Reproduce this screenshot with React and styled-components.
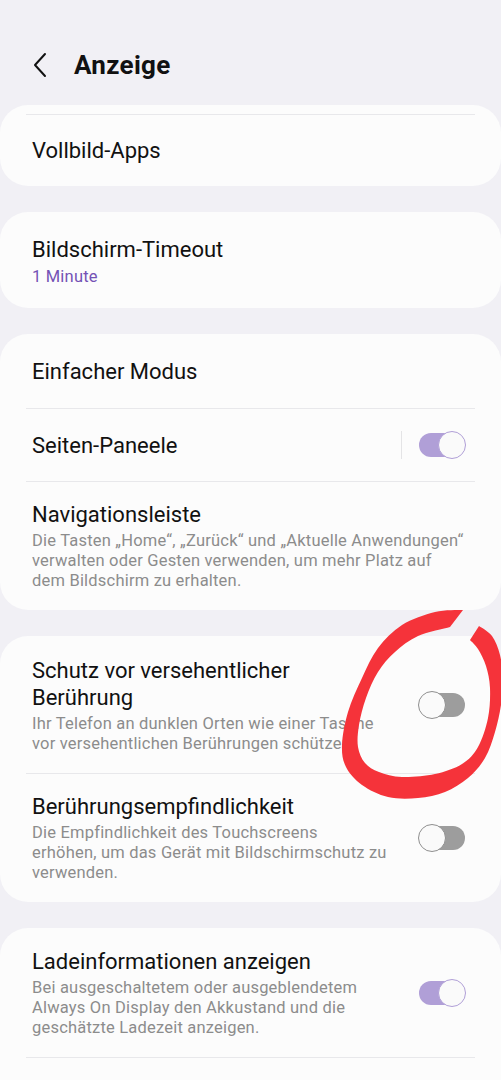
import React from "react";
import styled, { createGlobalStyle } from "styled-components";

const Global = createGlobalStyle`
  html, body {
    margin: 0;
    padding: 0;
    background: #f1f0f5;
  }
  body {
    font-family: Roboto, "Noto Sans", "Liberation Sans", sans-serif;
    -webkit-font-smoothing: antialiased;
  }
`;

const Page = styled.div`
  position: relative;
  width: 501px;
  height: 1080px;
  overflow: hidden;
  background: #f1f0f5;
`;

const Header = styled.header`
  height: 105px;
  padding-top: 25px;
  box-sizing: border-box;
  display: flex;
  align-items: center;
  padding-left: 32px;
  gap: 26px;
`;

const Title = styled.h1`
  margin: 0;
  font-size: 26px;
  font-weight: 700;
  color: #111;
  letter-spacing: 0.3px;
`;

const List = styled.div`
  display: flex;
  flex-direction: column;
  gap: 26px;
`;

const Card = styled.section`
  background: #fcfcfc;
  border-radius: 28px;
  padding-top: ${(p) => (p.$scrolled ? "9px" : "0")};
`;

const Divider = styled.div`
  height: 1px;
  margin: 0 26px;
  background: #e8e8eb;
`;

const Row = styled.div`
  display: flex;
  align-items: center;
  padding: ${(p) => p.$pt}px 32px ${(p) => p.$pb}px 32px;
  box-sizing: border-box;
`;

const Text = styled.div`
  flex: 1;
  padding-right: ${(p) => (p.$withControl ? "29px" : "0")};
`;

const Label = styled.div`
  font-size: 22px;
  line-height: 27px;
  color: #111;
`;

const Sub = styled.div`
  margin-top: 4px;
  font-size: 16.5px;
  line-height: 20px;
  letter-spacing: 0.2px;
  color: #7452b5;
`;

const Desc = styled.div`
  margin-top: 3px;
  font-size: 16.5px;
  line-height: 20px;
  letter-spacing: 0.2px;
  color: #8c8c8c;
`;

const VLine = styled.div`
  width: 1px;
  height: 28px;
  background: #e4e4e6;
  margin-right: 16px;
`;

const Track = styled.div`
  position: relative;
  width: 48px;
  height: 28px;
  flex: none;
  margin-right: 3px;
  &::before {
    content: "";
    position: absolute;
    left: 1px;
    right: 1px;
    top: 2px;
    bottom: 2px;
    border-radius: 12px;
    background: ${(p) => (p.$on ? "#b09fd7" : "#9d9d9d")};
  }
  &::after {
    content: "";
    position: absolute;
    top: 0;
    left: ${(p) => (p.$on ? "20px" : "0")};
    width: 28px;
    height: 28px;
    box-sizing: border-box;
    border-radius: 50%;
    background: #fafafa;
    border: 1.5px solid ${(p) => (p.$on ? "#b09fd7" : "#8f8f8f")};
  }
`;

const Annotation = styled.svg`
  position: absolute;
  left: 0;
  top: 0;
  pointer-events: none;
`;

const Back = () => (
  <svg width="16" height="26" viewBox="0 0 16 26">
    <path d="M13 2 L3 13 L13 24" fill="none" stroke="#111" strokeWidth="2" strokeLinecap="round" strokeLinejoin="round" />
  </svg>
);

// hand drawn marker stroke: outer edge then inner edge, smoothed
const outer = [
  [463, 610], [435, 612], [402, 625], [378, 648], [362, 678], [348, 712],
  [342, 745], [346, 767], [362, 785], [388, 797], [418, 798], [445, 792],
  [468, 778], [485, 758], [495, 732], [501, 705], [503, 680], [500, 655],
  [492, 636], [479, 626],
];
const inner = [
  [470, 640], [478, 649], [486, 666], [490, 688], [488, 718], [478, 747],
  [462, 764], [435, 774], [402, 777], [379, 772], [365, 763], [358, 747],
  [359, 725], [366, 698], [378, 672], [395, 652], [418, 636], [450, 627],
];

const smooth = (pts) => {
  let d = "";
  for (let i = 0; i < pts.length - 1; i++) {
    const p0 = pts[i - 1] || pts[i];
    const p1 = pts[i];
    const p2 = pts[i + 1];
    const p3 = pts[i + 2] || p2;
    const c1 = [p1[0] + (p2[0] - p0[0]) / 6, p1[1] + (p2[1] - p0[1]) / 6];
    const c2 = [p2[0] - (p3[0] - p1[0]) / 6, p2[1] - (p3[1] - p1[1]) / 6];
    d += ` C${c1[0]},${c1[1]} ${c2[0]},${c2[1]} ${p2[0]},${p2[1]}`;
  }
  return d;
};

const markPath =
  `M${outer[0][0]},${outer[0][1]}` +
  smooth(outer) +
  ` L${inner[0][0]},${inner[0][1]}` +
  smooth(inner) +
  " Z";

export default function App() {
  return (
    <Page>
      <Global />
      <Header>
        <Back />
        <Title>Anzeige</Title>
      </Header>
      <List>
        <Card $scrolled>
          <Divider />
          <Row $pt={22} $pb={22}>
            <Text>
              <Label>Vollbild-Apps</Label>
            </Text>
          </Row>
        </Card>

        <Card>
          <Row $pt={23.5} $pb={21.5}>
            <Text>
              <Label>Bildschirm-Timeout</Label>
              <Sub>1 Minute</Sub>
            </Text>
          </Row>
        </Card>

        <Card>
          <Row $pt={23.5} $pb={23.5}>
            <Text>
              <Label>Einfacher Modus</Label>
            </Text>
          </Row>
          <Divider />
          <Row $pt={22} $pb={22}>
            <Text $withControl>
              <Label>Seiten-Paneele</Label>
            </Text>
            <VLine />
            <Track $on />
          </Row>
          <Divider />
          <Row $pt={18.5} $pb={19.5}>
            <Text>
              <Label>Navigationsleiste</Label>
              <Desc>
                Die Tasten „Home“, „Zurück“ und „Aktuelle Anwendungen“
                verwalten oder Gesten verwenden, um mehr Platz auf dem
                Bildschirm zu erhalten.
              </Desc>
            </Text>
          </Row>
        </Card>

        <Card>
          <Row $pt={20.5} $pb={19.5}>
            <Text $withControl>
              <Label>Schutz vor versehentlicher Berührung</Label>
              <Desc>
                Ihr Telefon an dunklen Orten wie einer Tasche vor
                versehentlichen Berührungen schützen.
              </Desc>
            </Text>
            <Track />
          </Row>
          <Divider />
          <Row $pt={18.5} $pb={19}>
            <Text $withControl>
              <Label>Berührungsempfindlichkeit</Label>
              <Desc>
                Die Empfindlichkeit des Touchscreens erhöhen,&nbsp;um das
                Gerät mit Bildschirmschutz zu verwenden.
              </Desc>
            </Text>
            <Track />
          </Row>
        </Card>

        <Card>
          <Row $pt={20.5} $pb={19}>
            <Text $withControl>
              <Label>Ladeinformationen anzeigen</Label>
              <Desc>
                Bei ausgeschaltetem oder ausgeblendetem Always On Display den
                Akkustand und die geschätzte Ladezeit anzeigen.
              </Desc>
            </Text>
            <Track $on />
          </Row>
          <Divider />
          <Row $pt={23} $pb={23}>
            <Text>
              <Label>&nbsp;</Label>
            </Text>
          </Row>
        </Card>
      </List>

      <Annotation width="501" height="1080" viewBox="0 0 501 1080">
        <path d={markPath} fill="#f5333a" />
      </Annotation>
    </Page>
  );
}
